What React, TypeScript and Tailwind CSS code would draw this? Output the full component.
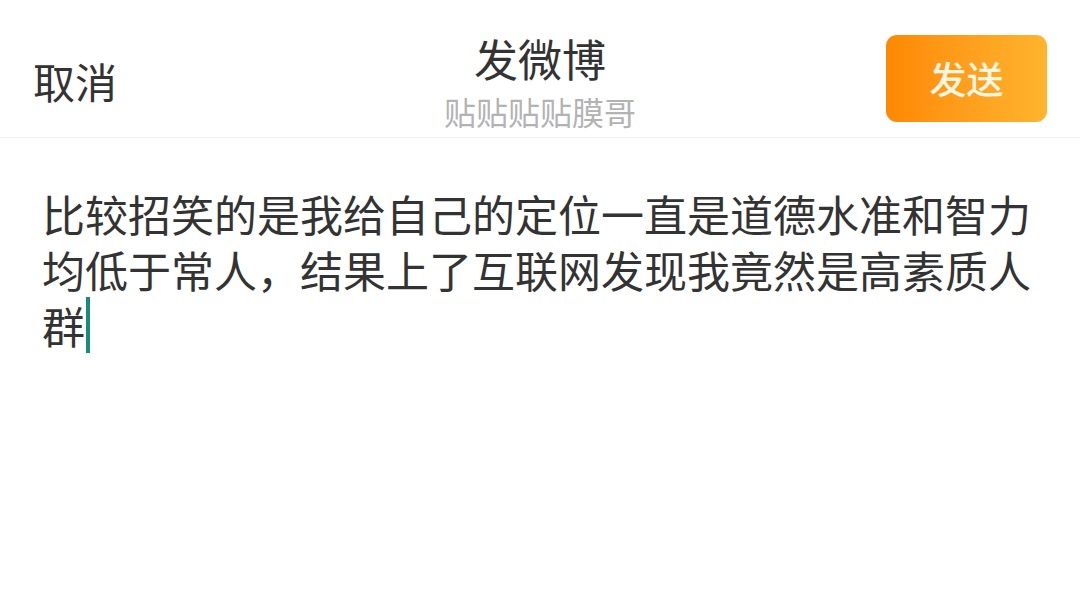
import React from "react";

export default function App() {
  const font = { fontFamily: '"Noto Sans CJK SC", "Noto Sans", sans-serif' };
  return (
    <div className="w-[1080px] h-[607px] bg-white overflow-hidden" style={font}>
      <header className="h-[138px] border-b border-[#f0f0f0] grid grid-cols-[1fr_auto_1fr] px-[33px]">
        <div className="pt-[56px]">
          <span className="text-[42px] leading-[50px] text-[#333333]">取消</span>
        </div>
        <div className="pt-[30px] flex flex-col items-center">
          <div className="text-[44px] leading-[56px] text-[#333333]">发微博</div>
          <div className="text-[32px] leading-[50px] text-[#b3b3b3]">贴贴贴贴膜哥</div>
        </div>
        <div className="flex justify-end pt-[35px]">
          <button className="w-[161px] h-[87px] rounded-[11px] bg-gradient-to-r from-[#ff8800] to-[#ffb42e] text-[37px] font-medium leading-none text-[#fff6e2] flex items-center justify-center">
            发送
          </button>
        </div>
      </header>
      <main className="pt-[47px] pl-[42px] pr-[40px]">
        <p className="text-[43px] leading-[56px] text-[#333333]">
          比较招笑的是我给自己的定位一直是道德水准和智力均低于常人，结果上了互联网发现我竟然是高素质人群
          <span className="inline-block w-[4px] h-[56px] bg-[#1a8a7c] align-top ml-[1px]"></span>
        </p>
      </main>
    </div>
  );
}
